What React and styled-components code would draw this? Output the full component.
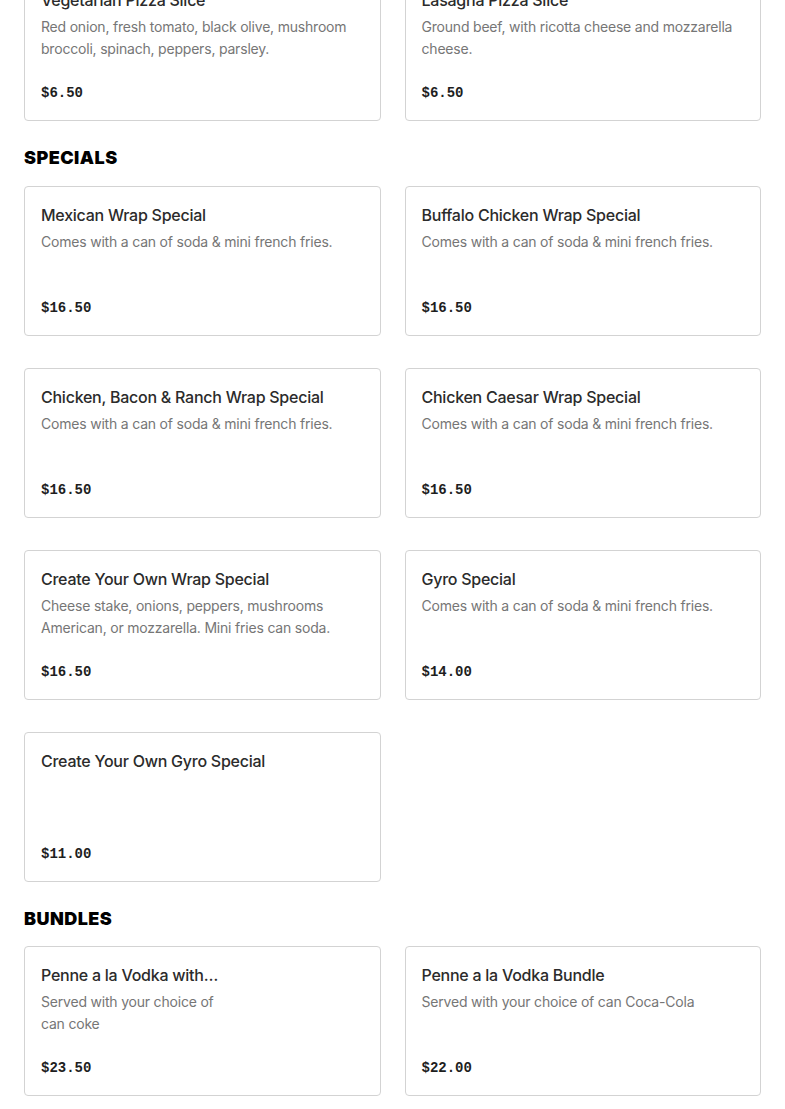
import React from "react";
import styled, { createGlobalStyle } from "styled-components";

const Global = createGlobalStyle`
  html, body { margin: 0; padding: 0; background: #fff; }
  body { font-family: Inter, "Noto Sans", sans-serif; -webkit-font-smoothing: antialiased; }
  * { box-sizing: border-box; }
`;

const Page = styled.main`
  padding: 0 24px;
  margin-top: -29px;
`;

const Section = styled.section`
  & + & { margin-top: 24px; }
`;

const Heading = styled.h2`
  margin: 0 0 16.5px;
  font-family: Inter, sans-serif;
  font-weight: 900;
  font-size: 18px;
  line-height: 24px;
  color: #000;
  letter-spacing: 0.45px;
  transform: translateY(0.5px);
`;

const Grid = styled.div`
  display: grid;
  grid-template-columns: 1fr 1fr;
  column-gap: 24px;
  row-gap: 32px;
`;

const Card = styled.article`
  display: flex;
  min-height: 150px;
  border: 1px solid #d3d3d3;
  border-radius: 4px;
  background: #fff;
  overflow: hidden;
`;

const Body = styled.div`
  flex: 1;
  min-width: 0;
  display: flex;
  flex-direction: column;
  padding: 16px;
  ${(p) => (p.$narrow ? "max-width: 210px;" : "")}
`;

const Title = styled.h3`
  margin: 0;
  font-size: 16px;
  line-height: 24px;
  font-weight: 500;
  color: #2b2b2b;
  white-space: nowrap;
  overflow: hidden;
  text-overflow: ellipsis;
  letter-spacing: -0.25px;
`;

const Desc = styled.p`
  margin: 4px 0 0;
  font-size: 14px;
  line-height: 22px;
  color: #767676;
  letter-spacing: -0.2px;
`;

const Price = styled.div`
  margin-top: auto;
  padding-top: 12px;
  font-family: "Liberation Mono", "DejaVu Sans Mono", monospace;
  font-weight: 700;
  font-size: 14px;
  line-height: 20px;
  color: #1e1e1e;
  transform: translateY(-1px);
`;

const sections = [
  {
    title: null,
    items: [
      {
        name: "Vegetarian Pizza Slice",
        desc: "Red onion, fresh tomato, black olive, mushroom broccoli, spinach, peppers, parsley.",
        price: "$6.50",
      },
      {
        name: "Lasagna Pizza Slice",
        desc: "Ground beef, with ricotta cheese and mozzarella cheese.",
        price: "$6.50",
      },
    ],
  },
  {
    title: "SPECIALS",
    items: [
      { name: "Mexican Wrap Special", desc: "Comes with a can of soda & mini french fries.", price: "$16.50" },
      { name: "Buffalo Chicken Wrap Special", desc: "Comes with a can of soda & mini french fries.", price: "$16.50" },
      { name: "Chicken, Bacon & Ranch Wrap Special", desc: "Comes with a can of soda & mini french fries.", price: "$16.50" },
      { name: "Chicken Caesar Wrap Special", desc: "Comes with a can of soda & mini french fries.", price: "$16.50" },
      {
        name: "Create Your Own Wrap Special",
        desc: "Cheese stake, onions, peppers, mushrooms American, or mozzarella. Mini fries can soda.",
        price: "$16.50",
      },
      { name: "Gyro Special", desc: "Comes with a can of soda & mini french fries.", price: "$14.00" },
      { name: "Create Your Own Gyro Special", desc: "", price: "$11.00" },
    ],
  },
  {
    title: "BUNDLES",
    items: [
      {
        name: "Penne a la Vodka with your choice of can coke",
        desc: "Served with your choice of can coke",
        price: "$23.50",
        narrow: true,
      },
      { name: "Penne a la Vodka Bundle", desc: "Served with your choice of can Coca-Cola", price: "$22.00" },
    ],
  },
];

export default function App() {
  return (
    <>
      <Global />
      <Page>
        {sections.map((s, i) => (
          <Section key={i}>
            {s.title && <Heading>{s.title}</Heading>}
            <Grid>
              {s.items.map((it) => (
                <Card key={it.name}>
                  <Body $narrow={it.narrow}>
                    <Title>{it.name}</Title>
                    {it.desc && <Desc>{it.desc}</Desc>}
                    <Price>{it.price}</Price>
                  </Body>
                </Card>
              ))}
            </Grid>
          </Section>
        ))}
      </Page>
    </>
  );
}
